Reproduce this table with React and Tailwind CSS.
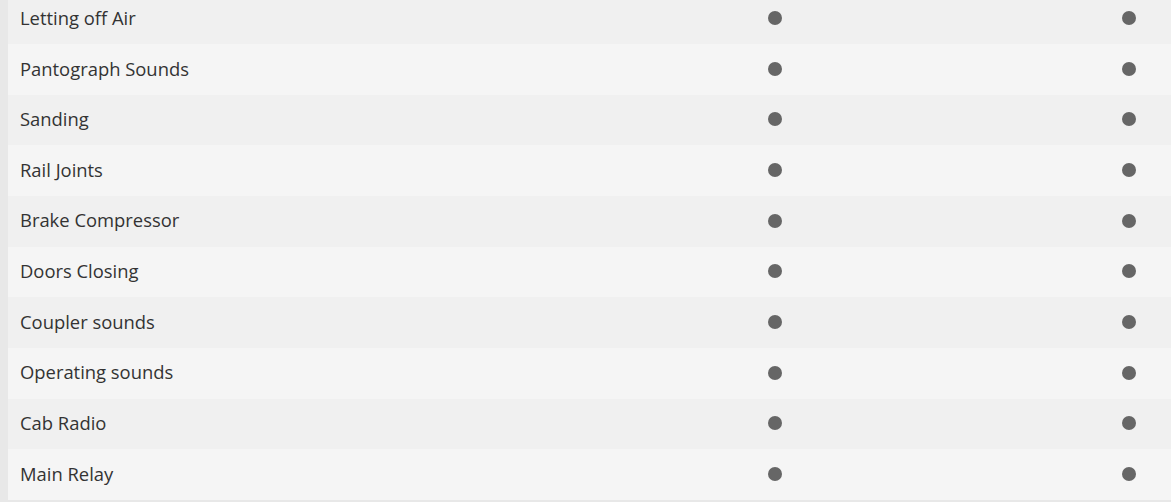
const rows = [
  'Letting off Air',
  'Pantograph Sounds',
  'Sanding',
  'Rail Joints',
  'Brake Compressor',
  'Doors Closing',
  'Coupler sounds',
  'Operating sounds',
  'Cab Radio',
  'Main Relay',
];

function Dot() {
  return <span className="block w-[14px] h-[14px] rounded-full bg-[#666666]" />;
}

export default function App() {
  return (
    <div className="h-[502px] overflow-hidden bg-[#e8e8e8] pl-2 font-['Open_Sans',sans-serif] text-[18.4px] text-[#333333]">
      <div className="-mt-[6.67px] border-b-2 border-[#e8e8e8]">
        {rows.map((name, i) => (
          <div
            key={name}
            className={`grid grid-cols-[455px_624px_84px] items-center h-[50.67px] ${i % 2 === 0 ? 'bg-[#f0f0f0]' : 'bg-[#f5f5f5]'}`}
          >
            <div className="pl-3 pb-[2px]">{name}</div>
            <div className="flex justify-center pb-[1px]"><Dot /></div>
            <div className="flex justify-center pb-[1px]"><Dot /></div>
          </div>
        ))}
      </div>
    </div>
  );
}
